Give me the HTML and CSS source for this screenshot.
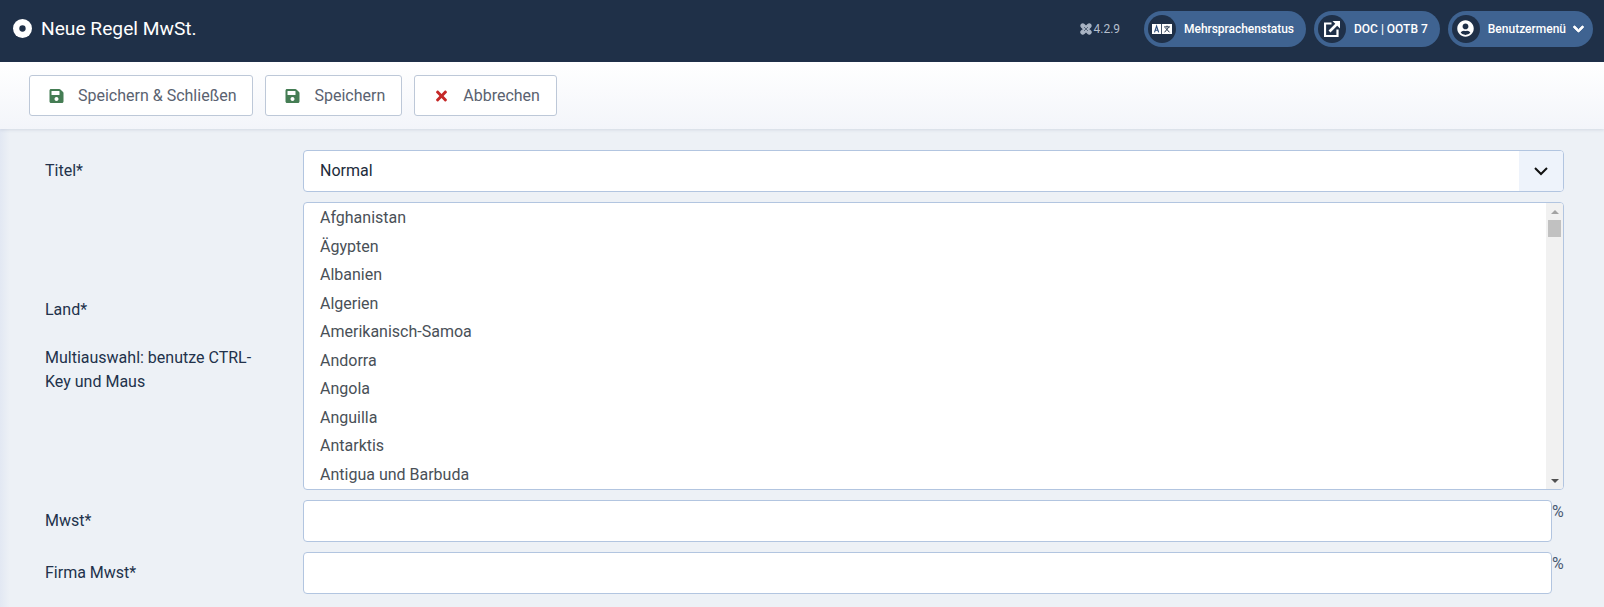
FILE: index.html
```html
<!DOCTYPE html>
<html lang="de">
<head>
<meta charset="utf-8">
<title>Neue Regel MwSt.</title>
<link rel="stylesheet" href="styles.css">
</head>
<body>
<header class="topbar">
  <div class="brand">
    <svg class="brand-icon" viewBox="0 0 18 18"><circle cx="9" cy="9" r="9" fill="#fff"/><circle cx="9" cy="9" r="3" fill="#1f3048"/></svg>
    <span class="brand-title">Neue Regel MwSt.</span>
  </div>
  <div class="top-items">
    <div class="version">
      <svg class="joomla" viewBox="0 0 12 12"><path d="M2.5 2.5 L9.5 9.5 M9.5 2.5 L2.5 9.5 M1.5 4 A1.6 1.6 0 1 1 4 1.5 L6 3.5 L8 1.5 A1.6 1.6 0 1 1 10.5 4 L8.5 6 L10.5 8 A1.6 1.6 0 1 1 8 10.5 L6 8.5 L4 10.5 A1.6 1.6 0 1 1 1.5 8 L3.5 6 Z" fill="#a9b4c4" stroke="#a9b4c4" stroke-width="1.3"/><path d="M4 4 L8 8 M8 4 L4 8" stroke="#1f3048" stroke-width=".6"/></svg>
      <span>4.2.9</span>
    </div>
    <div class="pill pill-lang">
      <span class="pill-icon">
        <svg class="ic-lang" viewBox="0 0 24 12"><rect x="0" y="0" width="11" height="12" fill="#fff"/><rect x="12" y="0" width="12" height="12" fill="#fff"/><path d="M3 10 L5.5 2.5 L8 10 M4 7.5 H7" fill="none" stroke="#2a4a78" stroke-width="1.4"/><path d="M14.5 3.5 H21.5 M18 2 V3.5 M20 4 L15 10 M16 4.5 L21 10" fill="none" stroke="#1f3048" stroke-width="1.2"/></svg>
      </span>
      <span class="pill-text">Mehrsprachenstatus</span>
    </div>
    <div class="pill">
      <span class="pill-icon">
        <svg class="ic-link" viewBox="0 0 16 16"><path d="M7.5 2.5 H1 V15 H13.5 V8.5" fill="none" stroke="#fff" stroke-width="2.2"/><path d="M5.5 10.5 L14 2" fill="none" stroke="#fff" stroke-width="2.6"/><path d="M8.5 0 H16 V7.5 Z" fill="#fff"/></svg>
      </span>
      <span class="pill-text">DOC | OOTB 7</span>
    </div>
    <div class="pill pill-user">
      <span class="pill-icon">
        <svg class="ic-user" viewBox="0 0 496 512"><path fill="#fff" d="M248 8C111 8 0 119 0 256s111 248 248 248 248-111 248-248S385 8 248 8zm0 96c48.6 0 88 39.4 88 88s-39.4 88-88 88-88-39.4-88-88 39.4-88 88-88zm0 344c-58.7 0-111.3-26.6-146.5-68.2 18.8-35.4 55.6-59.8 98.5-59.8 2.4 0 4.8.4 7.1 1.1 13 4.2 26.6 6.9 40.9 6.9 14.3 0 28-2.7 40.9-6.9 2.3-.7 4.7-1.1 7.1-1.1 42.9 0 79.7 24.4 98.5 59.8C359.3 421.4 306.7 448 248 448z"/></svg>
      </span>
      <span class="pill-text">Benutzermenü</span>
      <svg class="ic-chev" viewBox="0 0 448 512"><path fill="#fff" stroke="#fff" stroke-width="40" d="M207.029 381.476L12.686 187.132c-9.373-9.373-9.373-24.569 0-33.941l22.667-22.667c9.357-9.357 24.522-9.375 33.901-.04L224 284.505l154.745-154.021c9.379-9.335 24.544-9.317 33.901.04l22.667 22.667c9.373 9.373 9.373 24.569 0 33.941L240.971 381.476c-9.373 9.372-24.569 9.372-33.942 0z"/></svg>
    </div>
  </div>
</header>

<div class="toolbar">
  <button class="btn" type="button">
    <svg class="btn-icon save" viewBox="0 0 448 512"><path d="M433.941 129.941l-83.882-83.882A48 48 0 0 0 316.118 32H48C21.49 32 0 53.49 0 80v352c0 26.51 21.49 48 48 48h352c26.51 0 48-21.49 48-48V163.882a48 48 0 0 0-14.059-33.941zM224 416c-35.346 0-64-28.654-64-64 0-35.346 28.654-64 64-64s64 28.654 64 64c0 35.346-28.654 64-64 64zm96-304.52V212c0 6.627-5.373 12-12 12H76c-6.627 0-12-5.373-12-12V108c0-6.627 5.373-12 12-12h228.52c3.183 0 6.235 1.264 8.485 3.515l3.48 3.48A11.996 11.996 0 0 1 320 111.48z"/></svg>
    <span>Speichern &amp; Schließen</span>
  </button>
  <button class="btn" type="button">
    <svg class="btn-icon save" viewBox="0 0 448 512"><path d="M433.941 129.941l-83.882-83.882A48 48 0 0 0 316.118 32H48C21.49 32 0 53.49 0 80v352c0 26.51 21.49 48 48 48h352c26.51 0 48-21.49 48-48V163.882a48 48 0 0 0-14.059-33.941zM224 416c-35.346 0-64-28.654-64-64 0-35.346 28.654-64 64-64s64 28.654 64 64c0 35.346-28.654 64-64 64zm96-304.52V212c0 6.627-5.373 12-12 12H76c-6.627 0-12-5.373-12-12V108c0-6.627 5.373-12 12-12h228.52c3.183 0 6.235 1.264 8.485 3.515l3.48 3.48A11.996 11.996 0 0 1 320 111.48z"/></svg>
    <span>Speichern</span>
  </button>
  <button class="btn" type="button">
    <svg class="btn-icon cancel" viewBox="0 0 352 512"><path d="M242.72 256l100.07-100.07c12.28-12.28 12.28-32.19 0-44.48l-22.24-22.24c-12.28-12.28-32.19-12.28-44.48 0L176 189.28 75.93 89.21c-12.28-12.28-32.19-12.28-44.48 0L9.21 111.45c-12.28 12.28-12.28 32.19 0 44.48L109.28 256 9.21 356.07c-12.28 12.28-12.28 32.19 0 44.48l22.24 22.24c12.28 12.28 32.2 12.28 44.48 0L176 322.72l100.07 100.07c12.28 12.28 32.2 12.28 44.48 0l22.24-22.24c12.28-12.28 12.28-32.19 0-44.48L242.72 256z"/></svg>
    <span>Abbrechen</span>
  </button>
</div>

<main class="content">
  <div class="row">
    <label class="lbl">Titel*</label>
    <div class="field field-select">
      <span class="select-value">Normal</span>
      <span class="select-arrow">
        <svg viewBox="0 0 16 10"><path d="M2 2 L8 8 L14 2" fill="none" stroke="#111" stroke-width="2"/></svg>
      </span>
    </div>
  </div>
  <div class="row row-land">
    <div class="lbl lbl-land">
      <p>Land*</p>
      <p>Multiauswahl: benutze CTRL-Key und Maus</p>
    </div>
    <div class="listbox">
      <ul class="options">
        <li>Afghanistan</li>
        <li>Ägypten</li>
        <li>Albanien</li>
        <li>Algerien</li>
        <li>Amerikanisch-Samoa</li>
        <li>Andorra</li>
        <li>Angola</li>
        <li>Anguilla</li>
        <li>Antarktis</li>
        <li>Antigua und Barbuda</li>
      </ul>
      <div class="scrollbar">
        <span class="sb-btn"><span class="tri-up"></span></span>
        <span class="sb-thumb"></span>
        <span class="sb-space"></span>
        <span class="sb-btn"><span class="tri-down"></span></span>
      </div>
    </div>
  </div>
  <div class="row">
    <label class="lbl">Mwst*</label>
    <div class="field-wrap">
      <input class="field input" type="text">
      <span class="unit">%</span>
    </div>
  </div>
  <div class="row">
    <label class="lbl">Firma Mwst*</label>
    <div class="field-wrap">
      <input class="field input" type="text">
      <span class="unit">%</span>
    </div>
  </div>
</main>
</body>
</html>
```
FILE: styles.css
```css
* { box-sizing: border-box; }
html, body { margin: 0; height: 100%; }
body {
  font-family: Roboto, sans-serif;
  font-size: 16px;
  color: #22324b;
  background: #edf1f6;
  overflow: hidden;
}
.topbar {
  height: 62px;
  background: #1f3048;
  display: flex;
  align-items: center;
  justify-content: space-between;
  padding: 0 11px 5px 13px;
  color: #fff;
}
.brand { display: flex; align-items: center; gap: 9px; }
.brand-icon { width: 19px; height: 19px; display: block; }
.brand-title { font-size: 19.2px; font-weight: 400; }
.top-items { display: flex; align-items: center; gap: 8px; }
.version {
  display: flex; align-items: center; gap: 2px;
  font-size: 12px; color: #b5bfcd; margin-right: 16px;
}
.joomla { width: 12px; height: 12px; display: block; }
.pill {
  height: 36px;
  display: flex; align-items: center;
  background: #3f6391;
  border-radius: 18px;
  padding: 0 12px 0 4px;
}
.pill-icon {
  width: 28px; height: 28px;
  border-radius: 50%;
  background: #1f3048;
  display: flex; align-items: center; justify-content: center;
  margin-right: 8px;
}
.pill-text { font-size: 12px; font-weight: 500; color: #fff; }
.pill-lang .pill-text { letter-spacing: -.05px; }
.pill-user { padding-right: 9px; }
.pill-user .pill-icon { margin-right: 8px; }
.ic-lang { width: 20px; height: 10px; }
.ic-link { width: 16px; height: 16px; }
.ic-user { width: 17px; height: 17px; }
.ic-chev { width: 11px; height: 12px; margin-left: 7px; }
.toolbar {
  height: 67px;
  padding: 13px 29px 0;
  display: flex; align-items: flex-start; gap: 12px;
  background: linear-gradient(#fff, #f3f5fa);
  box-shadow: 0 1px 3px rgba(60, 80, 120, .15);
  position: relative;
}
.btn {
  height: 41px;
  display: flex; align-items: center; gap: 14px;
  padding: 0 16px 0 19px;
  background: #fff;
  border: 1px solid #bdc8d8;
  border-radius: 3px;
  font-family: inherit;
  font-size: 16px;
  color: #5a6270;
}
.btn-icon { width: 15px; height: 16px; display: block; }
.save { fill: #457d54; }
.cancel { fill: #c52827; }
.content {
  padding: 21px 40px 0 45px;
  background: linear-gradient(90deg, #e2e8f3 0, #edf1f6 10px);
  height: 478px;
}
.row { display: flex; margin-bottom: 10px; }
.lbl { width: 258px; flex: none; line-height: 24px; padding-top: 9px; padding-right: 30px; }
.lbl-land { display: flex; flex-direction: column; justify-content: center; padding-top: 0; }
.lbl-land p { margin: 0 0 24px; }
.lbl-land p:last-child { margin: 0; }
.field {
  display: block;
  height: 42px;
  background: #fff;
  border: 1px solid #b2c5e0;
  border-radius: 4px;
}
.field-select {
  flex: 1;
  display: flex; align-items: center; justify-content: space-between;
  overflow: hidden;
}
.select-value { padding: 0 0 1px 16px; color: #212b3a; }
.select-arrow {
  width: 44px; height: 100%;
  background: #eef3fb;
  display: flex; align-items: center; justify-content: center;
}
.select-arrow svg { width: 16px; height: 10px; display: block; }
.listbox {
  flex: 1;
  height: 288px;
  display: flex;
  background: #fff;
  border: 1px solid #b2c5e0;
  border-radius: 4px;
  overflow: hidden;
  color: #495057;
}
.options {
  flex: 1;
  list-style: none;
  margin: 0;
  padding: 1px 0 0;
  overflow: hidden;
}
.options li { height: 28.5px; line-height: 28.5px; padding: 0 16px; }
.scrollbar {
  width: 17px;
  flex: none;
  display: flex; flex-direction: column;
  background: #f1f1f1;
}
.sb-btn { height: 17px; display: flex; align-items: center; justify-content: center; }
.tri-up, .tri-down { width: 0; height: 0; border-left: 4px solid transparent; border-right: 4px solid transparent; }
.tri-up { border-bottom: 4px solid #a3a3a3; }
.tri-down { border-top: 4px solid #505050; }
.sb-thumb { height: 17px; margin: 0 2px; background: #c1c1c1; }
.sb-space { flex: 1; }
.field-wrap { flex: 1; display: flex; align-items: flex-start; }
.input { flex: 1; min-width: 0; padding: 0 16px; }
.unit { width: 12px; font-size: 16px; color: #495a73; line-height: 24px; }
```
